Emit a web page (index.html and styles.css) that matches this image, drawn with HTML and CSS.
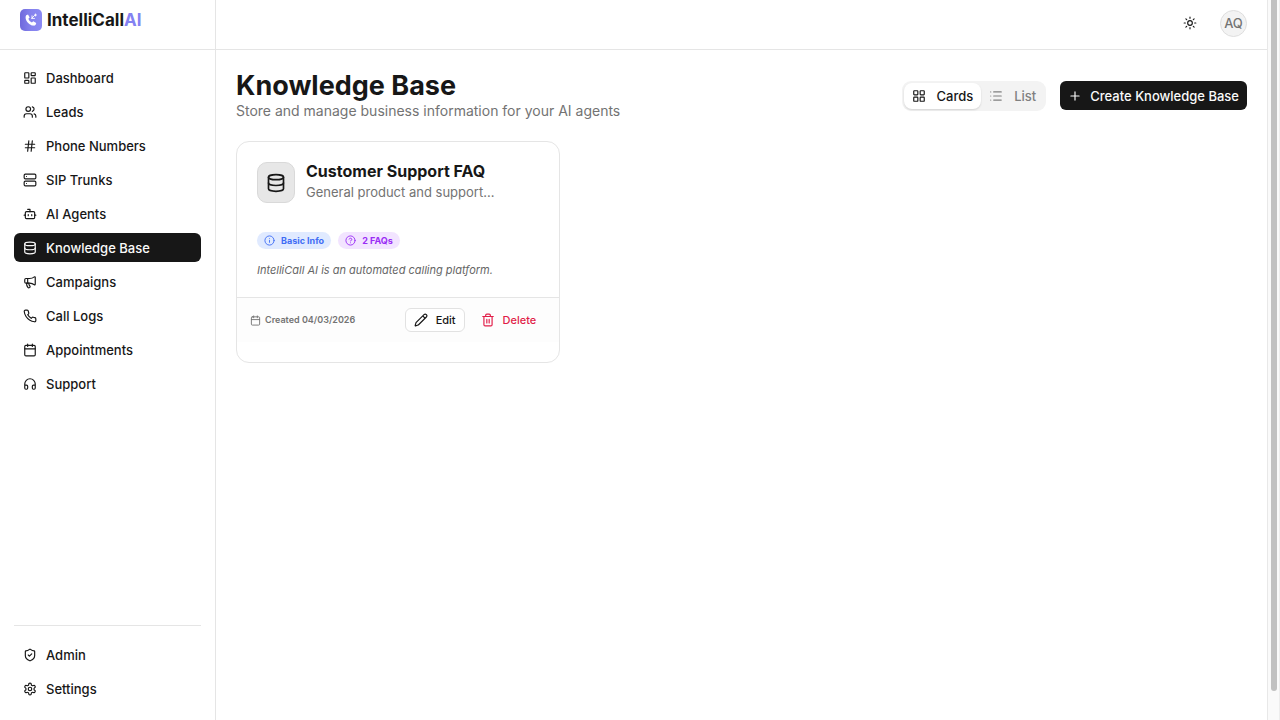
FILE: index.html
```html
<!DOCTYPE html>
<html lang="en">
<head>
<meta charset="utf-8">
<meta name="viewport" content="width=device-width, initial-scale=1">
<title>Knowledge Base - IntelliCall AI</title>
<link rel="stylesheet" href="styles.css">
</head>
<body>
<div class="app">
  <aside class="sidebar">
    <a class="brand" href="#">
      <svg class="brand-mark" viewBox="0 0 22 22" aria-hidden="true">
        <defs><linearGradient id="mark" x1="0" y1="0" x2="1" y2="0"><stop offset="0" stop-color="#6f69dc"/><stop offset=".5" stop-color="#8582ed"/><stop offset="1" stop-color="#8b8af4"/></linearGradient></defs>
        <rect width="22" height="22" rx="5" fill="url(#mark)"/>
        <path d="M6.2 6.2 8 5.5l1.700 3-1.300 1.300c.7 1.700 1.700 2.800 3.500 3.700l1.400-1.200 2.900 1.800c-.1 1.900-1.300 2.700-2.800 2.500-4-.5-7.300-3.900-7.800-7.700-.1-1 .1-2 .6-2.700Z" fill="#fff"/>
        <path d="M11.500 9.500 14.500 6.500M12 6.800v2.600h2.500M15.500 5v2M14.500 6h2" stroke="#fff" stroke-width=".9" fill="none" stroke-linecap="round"/>
      </svg>
      <span class="brand-name">IntelliCall<span class="brand-accent">AI</span></span>
    </a>
    <nav class="nav" aria-label="Main">
      <a class="nav-item" href="#"><svg class="icon" viewBox="0 0 24 24"><rect x="3" y="3" width="7" height="9" rx="1"/><rect x="14" y="3" width="7" height="5" rx="1"/><rect x="14" y="12" width="7" height="9" rx="1"/><rect x="3" y="16" width="7" height="5" rx="1"/></svg>Dashboard</a>
      <a class="nav-item" href="#"><svg class="icon" viewBox="0 0 24 24"><path d="M16 21v-2a4 4 0 0 0-4-4H6a4 4 0 0 0-4 4v2"/><circle cx="9" cy="7" r="4"/><path d="M22 21v-2a4 4 0 0 0-3-3.870M16 3.130a4 4 0 0 1 0 7.750"/></svg>Leads</a>
      <a class="nav-item" href="#"><svg class="icon" viewBox="0 0 24 24"><path d="M4 9h16M4 15h16M10 3 8 21M16 3l-2 18"/></svg>Phone Numbers</a>
      <a class="nav-item" href="#"><svg class="icon" viewBox="0 0 24 24"><rect x="2" y="2" width="20" height="8" rx="2"/><rect x="2" y="14" width="20" height="8" rx="2"/><path d="M6 6h.01M6 18h.01"/></svg>SIP Trunks</a>
      <a class="nav-item" href="#"><svg class="icon" viewBox="0 0 24 24"><path d="M12 8V4H8"/><rect x="4" y="8" width="16" height="12" rx="2"/><path d="M2 14h2M20 14h2M15 13v2M9 13v2"/></svg>AI Agents</a>
      <a class="nav-item active" href="#" aria-current="page"><svg class="icon" viewBox="0 0 24 24"><ellipse cx="12" cy="5" rx="9" ry="3"/><path d="M3 5v14a9 3 0 0 0 18 0V5"/><path d="M3 12a9 3 0 0 0 18 0"/></svg>Knowledge Base</a>
      <a class="nav-item" href="#"><svg class="icon" viewBox="0 0 24 24"><path d="M11 6a13 13 0 0 0 8.400-2.800A1 1 0 0 1 21 4v12a1 1 0 0 1-1.600.8A13 13 0 0 0 11 14H5a2 2 0 0 1-2-2V8a2 2 0 0 1 2-2z"/><path d="M6 14a12 12 0 0 0 2.400 7.200 2 2 0 0 0 3.200-2.400A8 8 0 0 1 10 14M8 6v8"/></svg>Campaigns</a>
      <a class="nav-item" href="#"><svg class="icon" viewBox="0 0 24 24"><path d="M22 16.920v3a2 2 0 0 1-2.180 2 19.790 19.790 0 0 1-8.630-3.070 19.500 19.500 0 0 1-6-6 19.790 19.790 0 0 1-3.070-8.670A2 2 0 0 1 4.110 2h3a2 2 0 0 1 2 1.720 12.840 12.840 0 0 0 .7 2.810 2 2 0 0 1-.45 2.110L8.090 9.910a16 16 0 0 0 6 6l1.270-1.270a2 2 0 0 1 2.110-.45 12.840 12.840 0 0 0 2.810.7A2 2 0 0 1 22 16.920z"/></svg>Call Logs</a>
      <a class="nav-item" href="#"><svg class="icon" viewBox="0 0 24 24"><path d="M8 2v4M16 2v4M3 10h18"/><rect x="3" y="4" width="18" height="18" rx="2"/></svg>Appointments</a>
      <a class="nav-item" href="#"><svg class="icon" viewBox="0 0 24 24"><path d="M3 14h3a2 2 0 0 1 2 2v3a2 2 0 0 1-2 2H5a2 2 0 0 1-2-2v-7a9 9 0 0 1 18 0v7a2 2 0 0 1-2 2h-1a2 2 0 0 1-2-2v-3a2 2 0 0 1 2-2h3"/></svg>Support</a>
    </nav>
    <nav class="nav nav-bottom" aria-label="Administration">
      <a class="nav-item" href="#"><svg class="icon" viewBox="0 0 24 24"><path d="M20 13c0 5-3.500 7.500-7.660 8.950a1 1 0 0 1-.67-.01C7.500 20.500 4 18 4 13V6a1 1 0 0 1 1-1c2 0 4.500-1.200 6.240-2.720a1.170 1.170 0 0 1 1.520 0C14.510 3.810 17 5 19 5a1 1 0 0 1 1 1z"/><path d="m9 12 2 2 4-4"/></svg>Admin</a>
      <a class="nav-item" href="#"><svg class="icon" viewBox="0 0 24 24"><path d="M12.220 2h-.44a2 2 0 0 0-2 2v.18a2 2 0 0 1-1 1.730l-.43.25a2 2 0 0 1-2 0l-.15-.08a2 2 0 0 0-2.730.73l-.22.38a2 2 0 0 0 .73 2.730l.15.1a2 2 0 0 1 1 1.720v.51a2 2 0 0 1-1 1.740l-.15.09a2 2 0 0 0-.73 2.730l.22.38a2 2 0 0 0 2.730.73l.15-.08a2 2 0 0 1 2 0l.43.25a2 2 0 0 1 1 1.730V20a2 2 0 0 0 2 2h.44a2 2 0 0 0 2-2v-.18a2 2 0 0 1 1-1.730l.43-.25a2 2 0 0 1 2 0l.15.08a2 2 0 0 0 2.730-.73l.22-.39a2 2 0 0 0-.73-2.730l-.15-.08a2 2 0 0 1-1-1.740v-.5a2 2 0 0 1 1-1.740l.15-.09a2 2 0 0 0 .73-2.730l-.22-.38a2 2 0 0 0-2.730-.73l-.15.08a2 2 0 0 1-2 0l-.43-.25a2 2 0 0 1-1-1.730V4a2 2 0 0 0-2-2z"/><circle cx="12" cy="12" r="3"/></svg>Settings</a>
    </nav>
  </aside>

  <div class="page">
    <header class="topbar">
      <button class="theme-toggle" type="button" aria-label="Toggle theme"><svg class="icon" viewBox="0 0 24 24"><circle cx="12" cy="12" r="4"/><path d="M12 2v2M12 20v2M4.930 4.930l1.410 1.410M17.660 17.660l1.410 1.410M2 12h2M20 12h2M6.340 17.660l-1.410 1.410M19.070 4.930l-1.410 1.410"/></svg></button>
      <button class="avatar" type="button">AQ</button>
    </header>
    <main class="content">
      <div class="page-head">
        <div class="headings">
          <h1 class="title">Knowledge Base</h1>
          <p class="subtitle">Store and manage business information for your AI agents</p>
        </div>
        <div class="actions">
          <div class="segmented">
            <button class="segment selected" type="button" aria-pressed="true"><svg class="icon" viewBox="0 0 24 24"><rect x="3" y="3" width="7" height="7" rx="1"/><rect x="14" y="3" width="7" height="7" rx="1"/><rect x="14" y="14" width="7" height="7" rx="1"/><rect x="3" y="14" width="7" height="7" rx="1"/></svg>Cards</button>
            <button class="segment" type="button" aria-pressed="false"><svg class="icon" viewBox="0 0 24 24"><path d="M3 5h.01M3 12h.01M3 19h.01M8 5h13M8 12h13M8 19h13"/></svg>List</button>
          </div>
          <button class="create" type="button"><svg class="icon" viewBox="0 0 24 24"><path d="M5 12h14M12 5v14"/></svg>Create Knowledge Base</button>
        </div>
      </div>
      <div class="cards">
        <article class="card">
          <div class="card-body">
            <div class="card-head">
              <div class="card-icon"><svg class="icon icon-large" viewBox="0 0 24 24"><ellipse cx="12" cy="5" rx="9" ry="3"/><path d="M3 5v14a9 3 0 0 0 18 0V5"/><path d="M3 12a9 3 0 0 0 18 0"/></svg></div>
              <div>
                <h2 class="card-title">Customer Support FAQ</h2>
                <p class="card-desc">General product and support...</p>
              </div>
            </div>
            <div class="badges">
              <span class="badge badge-blue"><svg class="icon icon-small" viewBox="0 0 24 24"><circle cx="12" cy="12" r="10"/><path d="M12 16v-4M12 8h.01"/></svg>Basic Info</span>
              <span class="badge badge-purple"><svg class="icon icon-small" viewBox="0 0 24 24"><circle cx="12" cy="12" r="10"/><path d="M9.090 9a3 3 0 0 1 5.830 1c0 2-3 3-3 3M12 17h.01"/></svg>2 FAQs</span>
            </div>
            <p class="excerpt">IntelliCall AI is an automated calling platform.</p>
          </div>
          <footer class="card-foot">
            <span class="created"><svg class="icon icon-small" viewBox="0 0 24 24"><path d="M8 2v4M16 2v4M3 10h18"/><rect x="3" y="4" width="18" height="18" rx="2"/></svg>Created 04/03/2026</span>
            <span class="card-actions">
              <button class="card-button edit" type="button"><svg class="icon" viewBox="0 0 24 24"><path d="M21.170 6.810a1 1 0 0 0-3.990-3.990L3.840 16.170a2 2 0 0 0-.5.83l-1.320 4.350a.5.500 0 0 0 .62.620l4.350-1.320a2 2 0 0 0 .83-.5zM15 5l4 4"/></svg>Edit</button>
              <button class="card-button delete" type="button"><svg class="icon" viewBox="0 0 24 24"><path d="M3 6h18M19 6v14a2 2 0 0 1-2 2H7a2 2 0 0 1-2-2V6M8 6V4a2 2 0 0 1 2-2h4a2 2 0 0 1 2 2v2M10 11v6M14 11v6"/></svg>Delete</button>
            </span>
          </footer>
        </article>
      </div>
    </main>
  </div>
  <div class="scroll-track" aria-hidden="true"><div class="scroll-thumb"></div></div>
</div>
</body>
</html>
```
FILE: styles.css
```css
* { box-sizing: border-box; }

body {
  margin: 0;
  background: #fff;
  color: #171717;
  font-family: Inter, "Liberation Sans", sans-serif;
  font-size: 13px;
  line-height: 16px;
}

h1, h2, p { margin: 0; }
a { color: inherit; text-decoration: none; }

button {
  display: flex;
  align-items: center;
  border: 0;
  padding: 0;
  background: none;
  color: inherit;
  font: inherit;
  font-weight: 500;
}

.icon {
  flex: none;
  width: 14px;
  height: 14px;
  fill: none;
  stroke: currentColor;
  stroke-width: 2;
  stroke-linecap: round;
  stroke-linejoin: round;
}
.icon-small { width: 11px; height: 11px; }
.icon-large { width: 20px; height: 20px; }

.app { display: flex; min-height: 100vh; }

.sidebar {
  display: flex;
  flex: none;
  flex-direction: column;
  width: 216px;
  border-right: 1px solid #e5e5e5;
}
.brand {
  display: flex;
  align-items: center;
  gap: 5px;
  height: 50px;
  padding: 0 20px 9px;
  border-bottom: 1px solid #e5e5e5;
}
.brand-mark { width: 22px; height: 22px; }
.brand-name { font-size: 17px; font-weight: 700; }
.brand-accent { color: #8482f2; }

.nav {
  display: flex;
  flex-direction: column;
  gap: 5px;
  padding: 13px 0;
  margin: 0 14px;
}
.nav-bottom {
  margin-top: auto;
  padding: 14px 0 17px;
  border-top: 1px solid #e5e5e5;
}
.nav-item {
  display: flex;
  align-items: center;
  gap: 9px;
  height: 29px;
  padding: 0 9px;
  border-radius: 6px;
  font-weight: 500;
}
.nav-item.active { background: #171717; color: #fafafa; }

.page { flex: 1; min-width: 0; }
.topbar {
  display: flex;
  align-items: center;
  justify-content: flex-end;
  gap: 23px;
  height: 50px;
  padding: 0 20px 3px;
  border-bottom: 1px solid #e5e5e5;
}
.avatar {
  justify-content: center;
  width: 27px;
  height: 27px;
  border: 1px solid #dedede;
  border-radius: 50%;
  background: #f3f3f3;
  color: #737373;
}

.content { padding: 20px; }
.page-head {
  display: flex;
  align-items: center;
  justify-content: space-between;
  gap: 20px;
}
.title { font-size: 27px; line-height: 31px; font-weight: 700; }
.subtitle { color: #737373; font-size: 14px; line-height: 20px; }
.actions { display: flex; align-items: center; gap: 14px; }

.segmented {
  display: flex;
  padding: 2px;
  border-radius: 9px;
  background: #f3f3f3;
}
.segment {
  gap: 11px;
  height: 26px;
  padding: 0 8px;
  border-radius: 8px;
  color: #808080;
}
.segment.selected {
  background: #fff;
  color: #171717;
  box-shadow: 0 1px 2px #0002;
}
.create {
  gap: 8px;
  height: 29px;
  padding: 0 8px;
  border-radius: 6px;
  background: #171717;
  color: #fafafa;
}

.cards {
  display: grid;
  grid-template-columns: repeat(3, 1fr);
  gap: 19px;
  margin-top: 20px;
}
.card {
  padding-bottom: 20px;
  border: 1px solid #e5e5e5;
  border-radius: 13px;
}
.card-body { padding: 20px 20px 19px; }
.card-head { display: flex; gap: 11px; }
.card-icon {
  display: flex;
  align-items: center;
  justify-content: center;
  width: 38px;
  height: 41px;
  border: 1px solid #d9d9d9;
  border-radius: 10px;
  background: #e7e7e7;
}
.card-title { font-size: 16px; line-height: 19px; font-weight: 700; }
.card-desc { color: #737373; line-height: 22px; }

.badges { display: flex; gap: 7px; margin-top: 29px; }
.badge {
  display: flex;
  align-items: center;
  gap: 6px;
  height: 17px;
  padding: 0 7px;
  border-radius: 9px;
  font-size: 9px;
  font-weight: 700;
}
.badge-blue { background: #e0eaff; color: #3f6df5; }
.badge-purple { background: #f2e4ff; color: #9a2cf5; }
.excerpt {
  margin-top: 13px;
  color: #666;
  font-size: 11px;
  font-style: italic;
}

.card-foot {
  display: flex;
  align-items: center;
  justify-content: space-between;
  height: 45px;
  padding: 0 13px;
  border-top: 1px solid #e5e5e5;
  background: #fdfdfd;
}
.created {
  display: flex;
  align-items: center;
  gap: 4px;
  color: #737373;
  font-size: 9px;
  font-weight: 600;
}
.card-actions { display: flex; gap: 6px; }
.card-button {
  gap: 8px;
  height: 24px;
  padding: 0 8px;
  border: 1px solid transparent;
  border-radius: 6px;
  font-size: 11px;
}
.edit { border-color: #e2e2e2; background: #fff; }
.delete { padding: 0 9px; color: #e11d48; }

.scroll-track {
  flex: none;
  width: 13px;
  padding: 0 2px 29px 3px;
  border-left: 1px solid #e8e8e8;
  border-right: 1px solid #ededed;
  background: #fafafa;
  display: flex;
}
.scroll-thumb {
  flex: 1;
  border-radius: 0 0 4px 4px;
  background: #c1c1c1;
}
```
